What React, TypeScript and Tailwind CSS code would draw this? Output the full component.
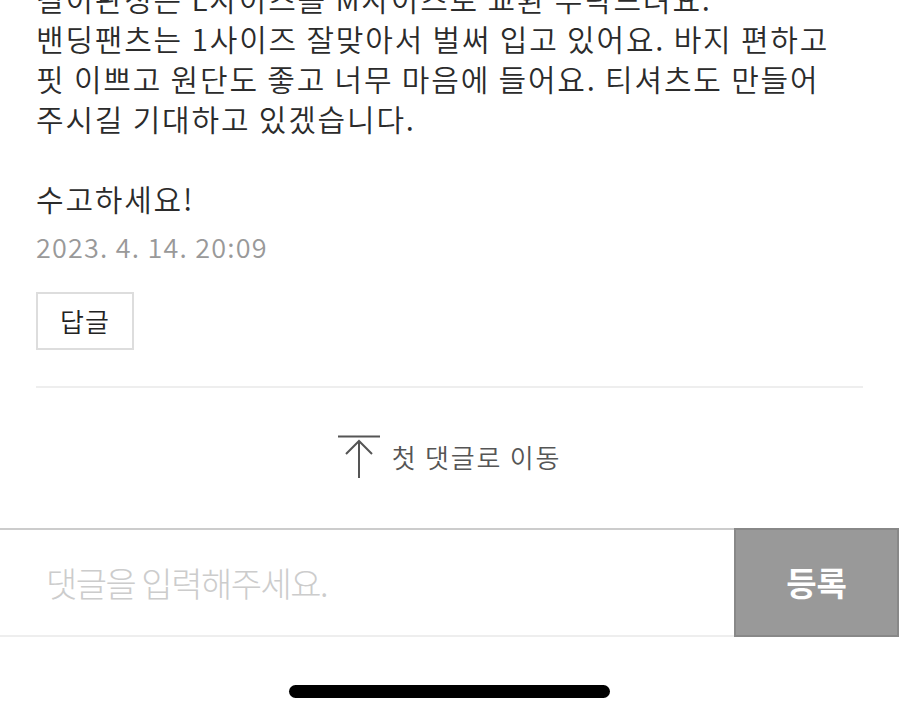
import React from "react";

const font = { fontFamily: '"Noto Sans CJK KR", "Noto Sans", sans-serif' };

function TopArrow() {
  return (
    <svg width="42" height="43" viewBox="0 0 42 43" fill="none" stroke="#555" strokeWidth="2">
      <path d="M0 1.5 H42" />
      <path d="M21 6 V43" />
      <path d="M8 19 L21 6 L34 19" />
    </svg>
  );
}

export default function App() {
  return (
    <div className="w-full h-[717px] bg-white flex flex-col overflow-hidden" style={font}>
      <div className="px-[36px] text-[30px] leading-[40px] text-[#2b2b2b] tracking-[1.8px] font-[350]">
        <p className="-mt-[22px]">
          길이판정은 L사이즈를 M사이즈로 교환 부탁드려요.
          <br />
          밴딩팬츠는 1사이즈 잘맞아서 벌써 입고 있어요. 바지 편하고
          <br />
          핏 이쁘고 원단도 좋고 너무 마음에 들어요. 티셔츠도 만들어
          <br />
          주시길 기대하고 있겠습니다.
          <br />
          <br />
          수고하세요!
        </p>
        <div className="mt-[12px] text-[27px] leading-[34px] text-[#999] tracking-[1.2px]">2023. 4. 14. 20:09</div>
        <button className="mt-[28px] w-[98px] h-[58px] border-2 border-[#ddd] text-[26px] text-[#222] flex items-center justify-center tracking-[1px]">
          답글
        </button>
        <div className="mt-[36px] h-[2px] bg-[#eee]" />
      </div>

      <div className="mt-[47px] flex items-center justify-center gap-[12px] text-[26px] text-[#555] tracking-[1.8px] font-[350]">
        <TopArrow />
        <span>첫 댓글로 이동</span>
      </div>

      <div className="mt-[50px] flex h-[109px] border-t-2 border-[#ccc] border-b-2 border-b-[#eee]">
        <div className="flex-1 flex items-center pl-[46px] text-[34px] text-[#ccc] tracking-[-1.5px] font-light">
          댓글을 입력해주세요.
        </div>
        <button className="w-[165px] -mt-[2px] -mb-[2px] bg-[#999] border-2 border-[#888] text-white text-[33px] font-bold">
          등록
        </button>
      </div>

      <div className="flex-1 flex justify-center">
        <div className="mt-[48px] w-[321px] h-[13px] rounded-full bg-black" />
      </div>
    </div>
  );
}
